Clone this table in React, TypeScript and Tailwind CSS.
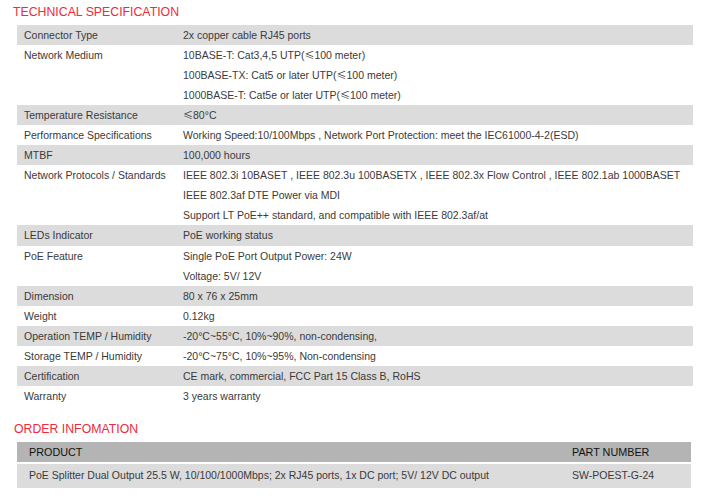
import React from "react";

type Row = { label: string; values: string[] };

const rows: Row[] = [
  { label: "Connector Type", values: ["2x copper cable RJ45 ports"] },
  {
    label: "Network Medium",
    values: [
      "10BASE-T: Cat3,4,5 UTP(≤100 meter)",
      "100BASE-TX: Cat5 or later UTP(≤100 meter)",
      "1000BASE-T: Cat5e or later UTP(≤100 meter)",
    ],
  },
  { label: "Temperature Resistance", values: ["≤80°C"] },
  {
    label: "Performance Specifications",
    values: ["Working Speed:10/100Mbps , Network Port Protection: meet the IEC61000-4-2(ESD)"],
  },
  { label: "MTBF", values: ["100,000 hours"] },
  {
    label: "Network Protocols / Standards",
    values: [
      "IEEE 802.3i 10BASET , IEEE 802.3u 100BASETX , IEEE 802.3x Flow Control , IEEE 802.1ab 1000BASET",
      "IEEE 802.3af DTE Power via MDI",
      "Support LT PoE++ standard, and compatible with IEEE 802.3af/at",
    ],
  },
  { label: "LEDs Indicator", values: ["PoE working status"] },
  { label: "PoE Feature", values: ["Single PoE Port Output Power: 24W", "Voltage: 5V/ 12V"] },
  { label: "Dimension", values: ["80 x 76 x 25mm"] },
  { label: "Weight", values: ["0.12kg"] },
  { label: "Operation TEMP / Humidity", values: ["-20°C~55°C, 10%~90%, non-condensing,"] },
  { label: "Storage TEMP / Humidity", values: ["-20°C~75°C, 10%~95%, Non-condensing"] },
  { label: "Certification", values: ["CE mark, commercial, FCC Part 15 Class B, RoHS"] },
  { label: "Warranty", values: ["3 years warranty"] },
];

function Value({ text }: { text: string }) {
  const parts = text.split("≤");
  return (
    <div className="whitespace-nowrap">
      {parts.map((p, i) => (
        <React.Fragment key={i}>
          {i > 0 && (
            <span style={{ fontFamily: '"Noto Sans CJK SC", sans-serif' }} className="text-[10px] leading-[10px]">
              ≤
            </span>
          )}
          {p}
        </React.Fragment>
      ))}
    </div>
  );
}

export default function App() {
  return (
    <div
      className="w-[724px] h-[504px] bg-white overflow-hidden text-[#3a3a3a]"
      style={{ fontFamily: '"Liberation Sans", Arial, sans-serif' }}
    >
      <div className="pt-[4px] pl-[13px] text-[12.3px] leading-[16px] text-[#ee2a3c]">
        TECHNICAL SPECIFICATION
      </div>
      <div className="mt-[5px] ml-[17px] w-[676px] text-[10.5px] leading-[20.05px]">
        {rows.map((r, i) => (
          <div
            key={r.label}
            className={`flex ${i % 2 === 0 ? "bg-[#dcdcdc]" : "bg-white"}`}
          >
            <div className="w-[166px] shrink-0 pl-[7px] whitespace-nowrap">{r.label}</div>
            <div className="flex-1 flex flex-col items-start">
              {r.values.map((v) => (
                <Value key={v} text={v} />
              ))}
            </div>
          </div>
        ))}
      </div>
      <div className="mt-[15px] pl-[14px] text-[12.3px] leading-[16px] text-[#ee2a3c]">
        ORDER INFOMATION
      </div>
      <div className="mt-[5px] ml-[17px] w-[674px] text-[10.5px] flex flex-col gap-[2px]">
        <div className="flex h-[20px] items-center bg-[#b4b4b4] text-[#111111] text-[10.8px]">
          <div className="w-[555px] shrink-0 pl-[12px]">PRODUCT</div>
          <div>PART NUMBER</div>
        </div>
        <div className="flex h-[24px] items-center bg-[#dcdcdc]">
          <div className="w-[555px] shrink-0 pl-[12px]">
            PoE Splitter Dual Output 25.5 W, 10/100/1000Mbps; 2x RJ45 ports, 1x DC port; 5V/ 12V DC output
          </div>
          <div>SW-POEST-G-24</div>
        </div>
      </div>
    </div>
  );
}
